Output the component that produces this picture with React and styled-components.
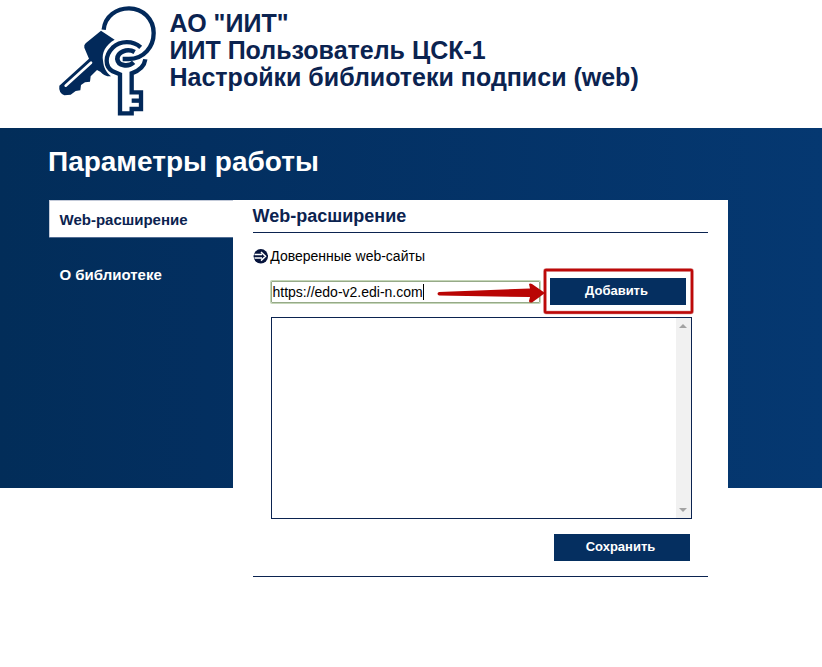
import React from "react";
import styled, { createGlobalStyle } from "styled-components";

const GlobalStyle = createGlobalStyle`
  * { box-sizing: border-box; }
  html, body { margin: 0; background: #fff; }
  body { font-family: "Liberation Sans", Arial, sans-serif; color: #000; }
`;

const Page = styled.div`
  width: 822px;
  height: 667px;
  overflow: hidden;
  background: #fff;
`;

const Header = styled.header`
  display: flex;
  height: 128px;
  padding-left: 50px;
`;

const Logo = styled.svg`
  flex: none;
  width: 120px;
  height: 125px;
`;

const Titles = styled.h1`
  margin: 0 0 0 -0.5px;
  padding-top: 10px;
  font-size: 25px;
  line-height: 27px;
  color: #0b2350;
  white-space: nowrap;
`;

const TitleLine = styled.span`
  display: block;
`;

const Band = styled.main`
  height: 360px;
  background: linear-gradient(90deg, #022d59 0%, #032f60 25%, #053871 100%);
`;

const BandTitle = styled.h2`
  margin: 0;
  height: 72px;
  padding: 17px 0 0 48px;
  font-size: 28px;
  line-height: 33px;
  color: #fff;
`;

const Columns = styled.div`
  display: flex;
  align-items: flex-start;
  padding-left: 49px;
`;

const Tabs = styled.nav`
  display: flex;
  flex-direction: column;
  gap: 18px;
  width: 184px;
`;

const Tab = styled.a`
  display: flex;
  align-items: center;
  height: 37px;
  padding: 2px 0 0 10.5px;
  font-size: 15px;
  font-weight: bold;
  color: ${(p) => (p.$active ? "#0b2350" : "#fff")};
  background: ${(p) => (p.$active ? "#fff" : "transparent")};
  box-shadow: ${(p) => (p.$active ? "inset 1px 1px #c3cad9, 0 1px #526d93" : "none")};
`;

const Panel = styled.section`
  width: 495px;
  height: 400px;
  padding: 0 20px;
  background: #fff;
`;

const PanelTitle = styled.h3`
  margin: 0;
  height: 33px;
  padding-top: 6px;
  border-bottom: 1px solid #0b2350;
  font-size: 18px;
  line-height: 21px;
  text-indent: -0.5px;
  color: #0b2350;
`;

const Label = styled.div`
  display: flex;
  align-items: center;
  gap: 2px;
  height: 18px;
  margin-top: 14px;
  font-size: 14px;
`;

const Bullet = styled.svg`
  width: 15px;
  height: 15px;
  margin-left: 0.25px;
`;

const InputRow = styled.div`
  position: relative;
  display: flex;
  align-items: flex-start;
  gap: 10px;
  height: 52px;
  padding: 13px 0 0 18px;
`;

const Field = styled.div`
  display: flex;
  align-items: center;
  width: 269px;
  height: 22px;
  margin-top: 3px;
  padding-left: 0.5px;
  border: 1px solid #96aa88;
  border-radius: 1px;
  font-size: 14px;
  box-shadow: 0 0 0 1px #c5d6b8;
`;

const Caret = styled.span`
  width: 1px;
  height: 16px;
  background: #000;
`;

const Button = styled.button`
  width: 136px;
  height: 27px;
  padding: 0 3px 2px 0;
  border: 0;
  background: #052f60;
  color: #fff;
  font: bold 13px "Liberation Sans", Arial, sans-serif;
`;

const Annotation = styled.svg`
  position: absolute;
  left: 177px;
  top: 0;
  width: 270px;
  height: 52px;
`;

const SiteList = styled.div`
  display: flex;
  justify-content: flex-end;
  width: 421px;
  height: 202px;
  margin-left: 18px;
  border: 1px solid #0b2350;
`;

const Scrollbar = styled.div`
  display: flex;
  flex-direction: column;
  justify-content: space-between;
  align-items: flex-start;
  width: 15px;
  padding: 6px 0 6px 3px;
  background: #f1f1f1;
`;

const ScrollArrow = styled.svg`
  width: 8px;
  height: 4px;
`;

const Footer = styled.div`
  display: flex;
  justify-content: flex-end;
  height: 58px;
  padding: 15px 18px 0 0;
  border-bottom: 1px solid #0b2350;
`;

function KeysLogo() {
  return (
    <Logo viewBox="0 0 360 375">
      <path d="M161 89C165 48 200 25 237 25C279 25 311 58 311 99C311 140 282 177 236 177L218 177" fill="none" stroke="#02295a" strokeWidth="13" />
      <path d="M153 92L194 119C166 135 155 158 159 182C161 204 169 216 183 229Q164 230 151 215L141 210L122 229L120 245L105 247L93 255L91 271L77 273L62 284L43 286Q25 278 28 257L117 176L103 143Q101 135 107 130Z" fill="#02295a" />
      <path d="M47 257L123 188" stroke="#fff" strokeWidth="8" strokeLinecap="round" />
      <path d="M272 142C249 121 211 121 188 143C164 167 164 200 188 214L210 223V340H245V327H273V277H245V220C266 213 283 201 286 178" fill="none" stroke="#02295a" strokeWidth="13" />
      <path d="M254 156C231 143 202 157 202 177C204 198 235 202 251 187" fill="none" stroke="#02295a" strokeWidth="14" />
      <path d="M245 302H269" stroke="#02295a" strokeWidth="13" />
    </Logo>
  );
}

export default function App() {
  return (
    <Page>
      <GlobalStyle />
      <Header>
        <KeysLogo />
        <Titles>
          <TitleLine>АО "ИИТ"</TitleLine>
          <TitleLine>ИИТ Пользователь ЦСК-1</TitleLine>
          <TitleLine>Настройки библиотеки подписи (web)</TitleLine>
        </Titles>
      </Header>
      <Band>
        <BandTitle>Параметры работы</BandTitle>
        <Columns>
          <Tabs>
            <Tab $active>Web-расширение</Tab>
            <Tab>О библиотеке</Tab>
          </Tabs>
          <Panel>
            <PanelTitle>Web-расширение</PanelTitle>
            <Label>
              <Bullet viewBox="0 0 15 15">
                <circle cx="7.8" cy="7.3" r="7.2" fill="#06143c" />
                <path d="M1.500 5.500H9M1.500 9H9M8 3L12.500 7.300L8 11.600" fill="none" stroke="#fff" strokeWidth="1.500" />
              </Bullet>
              Доверенные web-сайты
            </Label>
            <InputRow>
              <Field>
                https://edo-v2.edi-n.com
                <Caret />
              </Field>
              <Button>Добавить</Button>
              <Annotation viewBox="0 0 270 52">
                <rect x="115" y="5" width="147" height="42.500" rx="1" fill="none" stroke="#d98a8a" strokeWidth="3.5" />
                <rect x="115" y="5" width="147" height="42.500" rx="1" fill="none" stroke="#bd0909" strokeWidth="2.3" />
                <path d="M9 27L100 23.5L99 19Q100 18 102 19L115 28L102 37.5Q99 38 99 36L100 32L9 30.500Q6 28.500 9 27Z" fill="#b90504" />
              </Annotation>
            </InputRow>
            <SiteList>
              <Scrollbar>
                <ScrollArrow viewBox="0 0 8 4"><path d="M0 4L4 0L8 4Z" fill="#a3a3a3" /></ScrollArrow>
                <ScrollArrow viewBox="0 0 8 4"><path d="M0 0L4 4L8 0Z" fill="#a3a3a3" /></ScrollArrow>
              </Scrollbar>
            </SiteList>
            <Footer>
              <Button>Сохранить</Button>
            </Footer>
          </Panel>
        </Columns>
      </Band>
    </Page>
  );
}
